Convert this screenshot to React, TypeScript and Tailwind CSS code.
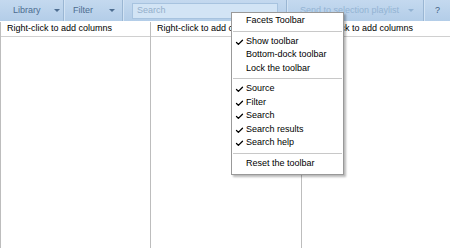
import { Check } from "lucide-react";

function Caret({ gap }: { gap: string }) {
  return (
    <svg width="6" height="3" viewBox="0 0 6 3" className={gap}>
      <path d="M0 0h6L3 3z" fill="currentColor" />
    </svg>
  );
}

function Sep() {
  return <div className="w-[2px] h-full border-l border-[#9ab6d3] bg-[#d2e3f4]" />;
}

const columns = ["w-[150px]", "w-[151px]", "flex-1"];

const menu: { label: string; checked?: boolean; sep?: boolean }[] = [
  { label: "Facets Toolbar" },
  { label: "", sep: true },
  { label: "Show toolbar", checked: true },
  { label: "Bottom-dock toolbar" },
  { label: "Lock the toolbar" },
  { label: "", sep: true },
  { label: "Source", checked: true },
  { label: "Filter", checked: true },
  { label: "Search", checked: true },
  { label: "Search results", checked: true },
  { label: "Search help", checked: true },
  { label: "", sep: true },
  { label: "Reset the toolbar" },
];

export default function App() {
  return (
    <div
      className="relative w-[450px] h-[248px] bg-white overflow-hidden text-[9px] text-black"
      style={{ fontFamily: "'Liberation Sans', Arial, sans-serif" }}
    >
      <div className="flex items-stretch h-[22px] bg-gradient-to-b from-[#c4d9ef] to-[#b3cde8] border-b border-white text-[#4d6d90]">
        <div className="flex items-center w-[63px] pl-[13px]">
          Library
          <Caret gap="ml-[13px]" />
        </div>
        <Sep />
        <div className="flex items-center w-[57px] pl-[8px]">
          Filter
          <Caret gap="ml-[16px]" />
        </div>
        <Sep />
        <div className="flex items-center w-[162px] px-[8px]">
          <div className="w-full h-[16px] bg-[#d2e4f5] border border-[#a7c3df] flex items-center pl-[4px] text-[#94afcb]">
            Search
          </div>
        </div>
        <Sep />
        <div className="flex items-center w-[135px] pl-[12px] text-[#93b3d3]">
          Send to selection playlist
          <Caret gap="ml-[9px]" />
        </div>
        <Sep />
        <div className="flex-1 flex items-center justify-center text-[#3f5f83]">?</div>
      </div>
      <div className="flex h-[226px]">
        {columns.map((w, c) => (
          <div key={c} className={`flex flex-col ${w} border-l border-[#bdbdbd]`}>
            <div className="h-[15px] border-b border-[#d0d0d0] pl-[6px] flex items-center whitespace-nowrap overflow-hidden">
              Right-click to add columns
            </div>
          </div>
        ))}
      </div>
      <div className="absolute left-[231px] top-[12px] w-[113px] bg-white border border-[#999999] shadow-[2px_2px_2px_rgba(0,0,0,0.28)] pt-[1px] pb-[4px]">
        {menu.map((m, i) =>
          m.sep ? (
            <div key={i} className="h-[7px] flex items-center px-[1px]">
              <div className="h-px w-full bg-[#c8c8c8]" />
            </div>
          ) : (
            <div key={i} className="h-[13.5px] flex items-center pl-[14px] relative leading-none">
              {m.checked && (
                <Check size={9} strokeWidth={3.5} className="absolute left-[3px] top-[3px]" />
              )}
              {m.label}
            </div>
          )
        )}
      </div>
    </div>
  );
}
